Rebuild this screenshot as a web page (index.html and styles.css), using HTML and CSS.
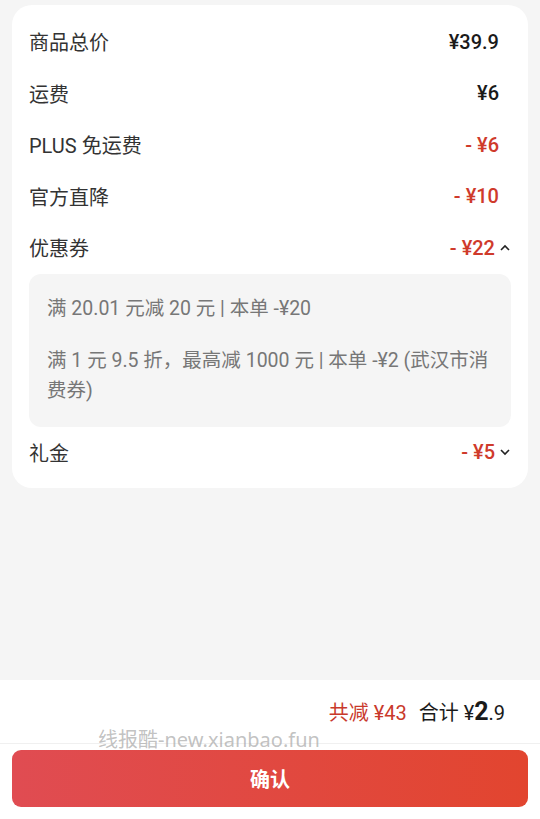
FILE: index.html
```html
<!DOCTYPE html>
<html lang="zh-CN">
<head>
    <meta charset="UTF-8">
    <meta name="viewport" content="width=device-width, initial-scale=1.0">
    <title>金额明细</title>
    <link rel="stylesheet" href="styles.css">
</head>
<body>
    <div class="page">
        <div class="card">
            <div class="row">
                <span class="label">商品总价</span>
                <span class="value">¥39.9</span>
            </div>
            <div class="row">
                <span class="label">运费</span>
                <span class="value">¥6</span>
            </div>
            <div class="row">
                <span class="label">PLUS 免运费</span>
                <span class="value red">- ¥6</span>
            </div>
            <div class="row">
                <span class="label">官方直降</span>
                <span class="value red">- ¥10</span>
            </div>
            <div class="row">
                <span class="label">优惠券</span>
                <span class="value red with-arrow">- ¥22
                    <svg class="arrow" viewBox="0 0 12 12"><path d="M2 8 L6 4 L10 8" /></svg>
                </span>
            </div>
            <div class="coupons">
                <p>满 20.01 元减 20 元 | 本单 -¥20</p>
                <p>满 1 元 9.5 折，最高减 1000 元 | 本单 -¥2 (武汉市消费券)</p>
            </div>
            <div class="row">
                <span class="label">礼金</span>
                <span class="value red with-arrow">- ¥5
                    <svg class="arrow" viewBox="0 0 12 12"><path d="M2 4 L6 8 L10 4" /></svg>
                </span>
            </div>
        </div>
    </div>

    <div class="footer">
        <div class="summary">
            <span class="saved">共减 ¥43</span>
            <span class="total">合计 ¥<b>2</b>.9</span>
        </div>
        <div class="watermark">线报酷-new.xianbao.fun</div>
        <button class="confirm">确认</button>
    </div>
</body>
</html>
```

FILE: styles.css
```css
body {
    margin: 0;
    height: 100vh;
    background: #f5f5f5;
    font-family: Roboto, 'Noto Sans CJK SC', sans-serif;
    color: #222;
    display: flex;
    flex-direction: column;
    overflow: hidden;
}

.page {
    flex: 1;
    padding: 5px 12px 0;
}

.card {
    background: #fff;
    border-radius: 20px;
    padding: 11px 17px 10px;
}

.row {
    height: 51.5px;
    display: flex;
    align-items: center;
    justify-content: space-between;
    font-size: 20px;
}

.label {
    color: #333;
}

.value {
    padding-right: 12px;
    font-weight: 500;
    color: #1a1a1a;
    display: flex;
    align-items: center;
}

.value.red {
    color: #cf3a2b;
}

.value.with-arrow {
    padding-right: 0;
}

.arrow {
    width: 12px;
    height: 12px;
    margin-left: 4px;
    fill: none;
    stroke: #222;
    stroke-width: 1.6;
}

.coupons {
    background: #f5f5f5;
    border-radius: 12px;
    padding: 20px 16px 21px 18px;
    color: #777;
    font-size: 19.5px;
    line-height: 30px;
}

.coupons p {
    margin: 0;
}

.coupons p + p {
    margin-top: 22px;
}

.footer {
    background: #fff;
    height: 139px;
    position: relative;
}

.summary {
    height: 64px;
    display: flex;
    align-items: center;
    justify-content: flex-end;
    padding-right: 35px;
    font-size: 20px;
    border-bottom: 1px solid #f0f0f0;
    box-sizing: border-box;
}

.saved {
    color: #c9392b;
    margin-right: 12px;
}

.total {
    color: #1a1a1a;
}

.total b {
    font-size: 25px;
    font-weight: 700;
}

.watermark {
    position: absolute;
    left: 98px;
    top: 44px;
    font-family: 'Noto Sans', 'Noto Sans CJK SC', sans-serif;
    font-size: 20px;
    color: rgba(160, 160, 160, 0.65);
    pointer-events: none;
}

.confirm {
    display: block;
    margin: 6px 12px 0;
    width: calc(100% - 24px);
    height: 57px;
    border: none;
    border-radius: 9px;
    background: linear-gradient(90deg, #e04c52, #e2452f);
    color: #fff;
    font-family: inherit;
    font-size: 20px;
    font-weight: 700;
}
```
